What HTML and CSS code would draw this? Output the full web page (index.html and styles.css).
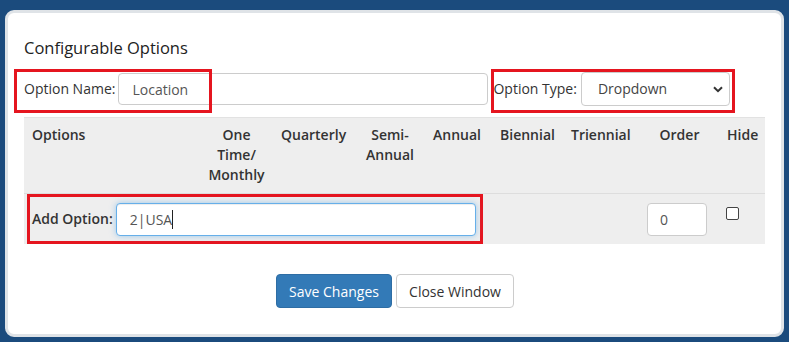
FILE: index.html
```html
<!DOCTYPE html>
<html>
<head>
<meta charset="utf-8">
<link rel="stylesheet" href="styles.css">
</head>
<body>
<div class="card">
  <h2 class="title">Configurable Options</h2>
  <div class="fields">
    <span class="mark mark-name"></span>
    <span class="mark mark-type"></span>
    <label class="lbl">Option Name:</label>
    <input class="ctl name-input" type="text" value="Location">
    <label class="lbl lbl-type">Option Type:</label>
    <div class="select">Dropdown
      <svg class="chev" width="10" height="7" viewBox="0 0 10 7"><path d="M1 1.2 L5 5.2 L9 1.2" fill="none" stroke="#333" stroke-width="2"/></svg>
    </div>
  </div>
  <table class="opts">
    <colgroup>
      <col style="width:176px"><col style="width:73px"><col style="width:82px"><col style="width:70px"><col style="width:67px"><col style="width:71px"><col style="width:77px"><col style="width:79px"><col style="width:46px">
    </colgroup>
    <thead>
      <tr>
        <th>Options</th>
        <th class="c">One Time/ Monthly</th>
        <th>Quarterly</th>
        <th class="c">Semi-Annual</th>
        <th>Annual</th>
        <th>Biennial</th>
        <th>Triennial</th>
        <th class="c">Order</th>
        <th>Hide</th>
      </tr>
    </thead>
    <tbody>
      <tr class="add-row">
        <td colspan="5" class="add-cell">
          <div class="add-box">
            <label class="add-lbl">Add Option:</label>
            <div class="ctl add-input">2|USA<span class="caret"></span></div>
          </div>
        </td>
        <td></td>
        <td></td>
        <td class="order-cell"><input class="ctl order-input" type="text" value="0"></td>
        <td class="hide-cell"><span class="check"></span></td>
      </tr>
    </tbody>
  </table>
  <div class="actions">
    <button class="btn btn-primary">Save Changes</button>
    <button class="btn btn-default">Close Window</button>
  </div>
</div>
</body>
</html>
```
FILE: styles.css
```css
html, body {
  margin: 0;
  padding: 0;
}
body {
  background: #1b4b7d;
  font-family: "Open Sans", "Liberation Sans", sans-serif;
  font-size: 14px;
  color: #333;
  width: 789px;
  height: 342px;
  overflow: hidden;
}
.card {
  margin: 10px 0 0 5px;
  width: 779px;
  height: 327px;
  box-sizing: border-box;
  background: #fff;
  border: 3px solid #dfe3e7;
  border-radius: 9px;
  padding: 24px 16px 0 16px;
}
.title {
  margin: 0;
  font-size: 16.5px;
  font-weight: 400;
  line-height: 22px;
  color: #222;
}
.fields {
  position: relative;
  display: flex;
  align-items: center;
  height: 34px;
  margin-top: 13px;
}
.mark {
  position: absolute;
  border: 3px solid #e5151f;
  box-sizing: border-box;
}
.mark-name {
  left: -10px;
  top: -3px;
  width: 198px;
  height: 44px;
}
.mark-type {
  left: 467px;
  top: -3px;
  width: 244px;
  height: 44px;
}
.lbl {
  font-size: 14px;
  margin-right: 3px;
  line-height: 20px;
}
.lbl-type {
  margin-left: 5px;
  margin-right: 4px;
}
.ctl {
  font-family: "Open Sans", "Liberation Sans", sans-serif;
  font-size: 14px;
  color: #555;
  border: 1px solid #ccc;
  border-radius: 4px;
  box-sizing: border-box;
  background: #fff;
  outline: none;
}
.name-input {
  width: 370px;
  height: 32px;
  padding: 0 13px;
}
.select {
  position: relative;
  width: 149px;
  height: 34px;
  box-sizing: border-box;
  border: 1px solid #ccc;
  border-radius: 4px;
  padding: 0 16px;
  line-height: 32px;
  color: #444;
}
.chev {
  position: absolute;
  right: 6px;
  top: 13px;
}
.opts {
  margin-top: 11px;
  width: 741px;
  table-layout: fixed;
  border-collapse: collapse;
  background: #eee;
  border-top: 1px solid #e2e2e2;
}
.opts th {
  font-weight: 600;
  text-align: left;
  vertical-align: top;
  padding: 7px 8px 8px 8px;
  line-height: 20px;
  border-bottom: 1px solid #ddd;
  color: #333;
}
.opts th.c {
  text-align: center;
}
.add-row {
  height: 50px;
}
.opts td {
  padding: 0;
  vertical-align: top;
}
.opts td.add-cell {
  padding-left: 3px;
}
.add-box {
  border: 3px solid #e5151f;
  height: 50px;
  box-sizing: border-box;
  display: flex;
  align-items: center;
  padding: 0 4px 0 2px;
  width: 456px;
}
.add-lbl {
  font-weight: 600;
  margin-right: 3px;
  line-height: 20px;
}
.add-input {
  width: 360px;
  height: 33px;
  line-height: 31px;
  padding: 0 13px;
  margin-top: 1px;
  border-color: #66afe9;
  box-shadow: inset 0 1px 1px rgba(0,0,0,.075), 0 0 6px rgba(102,175,233,.6);
  color: #555;
}
.caret {
  display: inline-block;
  width: 1px;
  height: 19px;
  background: #222;
  vertical-align: -4px;
}
.opts td.order-cell {
  padding: 9px 0 0 7px;
}
.order-input {
  width: 60px;
  height: 33px;
  padding: 0 12px;
}
.opts td.hide-cell {
  padding: 13px 0 0 7px;
}
.check {
  display: block;
  width: 13px;
  height: 13px;
  box-sizing: border-box;
  border: 1px solid #444;
  border-radius: 2px;
  background: #fff;
}
.actions {
  display: flex;
  justify-content: center;
  gap: 4px;
  margin-top: 30px;
  padding-left: 1px;
}
.btn {
  font-family: "Open Sans", "Liberation Sans", sans-serif;
  font-size: 14px;
  height: 34px;
  border-radius: 4px;
  padding: 0 12px;
  border: 1px solid;
  margin: 0;
}
.btn-primary {
  background: #337ab7;
  border-color: #2e6da4;
  color: #fff;
  width: 116px;
}
.btn-default {
  background: #fff;
  border-color: #ccc;
  color: #333;
  width: 118px;
}
```
